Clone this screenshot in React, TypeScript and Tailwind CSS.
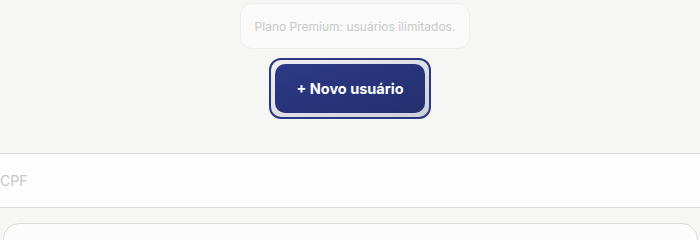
import React from 'react'

const App = () => {
  return (
    <div className="w-[700px] h-[240px] overflow-hidden bg-[#f6f6f5] font-['Inter',sans-serif]">
      <div className="flex flex-col items-center pt-[3px]">
        <div className="ml-[10px] w-[230px] h-[46px] flex items-center justify-center rounded-[12px] border border-[#eeeeee] bg-[#fafafa]">
          <p className="mt-[2px] text-[12px] text-[#c9c9c9]">Plano Premium: usuários ilimitados.</p>
        </div>
        <div className="mt-[9px] rounded-[12px] border-2 border-[#2c3784] bg-gradient-to-br from-[#f0f0f4] to-[#cfcfd8] p-[4px]">
          <button className="w-[150px] h-[49px] rounded-[10px] bg-gradient-to-br from-[#2c3a86] to-[#232f6e] text-white text-[14.5px] font-bold">
            + Novo usuário
          </button>
        </div>
      </div>

      <div className="mt-[34px] -mx-[20px] h-[55px] flex items-center border-y border-[#d9d9d9] bg-[#fdfdfd] pl-[20px]">
        <span className="text-[14px] text-[#c6c6c6]">CPF</span>
      </div>

      <div className="mt-[15px] ml-[3px] mr-[2px] h-[40px] rounded-[16px] border border-[#dcdcdc] bg-[#fcfcfc]"></div>
    </div>
  )
}

export default App
